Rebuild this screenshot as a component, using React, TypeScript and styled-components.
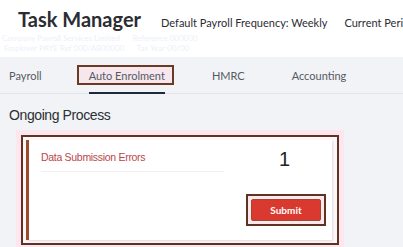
import React from 'react'
import styled, { createGlobalStyle } from 'styled-components'

const Global = createGlobalStyle`
  body {
    margin: 0;
    background: #f1f3f6;
    font-family: Lato, "Liberation Sans", sans-serif;
  }
`

const Page = styled.div`
  width: 403px;
  height: 247px;
  overflow: hidden;
  background: #f1f3f6;
`

const Header = styled.header`
  height: 57px;
  background: #fff;
  padding: 6px 0 0 18px;
  box-sizing: border-box;
  overflow: hidden;
`

const TopRow = styled.div`
  display: flex;
  align-items: baseline;
  white-space: nowrap;
`

const Title = styled.h1`
  margin: 0;
  font-size: 20px;
  line-height: 26px;
  font-weight: 700;
  color: #2b2d33;
`

const Meta = styled.span<{ gap: number }>`
  font-size: 11px;
  color: #2b2d33;
  margin-left: ${(p) => p.gap}px;
`

const Ghost = styled.div`
  margin: 1px 0 0 -18px;
  font-size: 8px;
  line-height: 10px;
  color: #edf0fa;
  white-space: nowrap;
`

const TabBar = styled.nav`
  display: flex;
  gap: 47px;
  height: 37px;
  padding: 0 9px;
  border-bottom: 1px solid #e2e5ea;
  box-sizing: border-box;
`

const Tab = styled.div<{ active?: boolean; marked?: boolean }>`
  position: relative;
  display: flex;
  align-items: center;
  font-size: 11px;
  color: #555a62;
  border-bottom: 2px solid ${(p) => (p.active ? '#1e2a3c' : 'transparent')};
  margin-bottom: -1px;
  padding-top: 1px;

  ${(p) =>
    p.marked &&
    `
    &::before {
      content: '';
      position: absolute;
      left: -12px;
      right: -9px;
      top: 8px;
      height: 20px;
      border: 2px solid #6a3a25;
      background: rgba(252, 214, 228, 0.45);
      box-sizing: border-box;
    }
  `}
`

const TabLabel = styled.span`
  position: relative;
`

const Section = styled.section`
  padding: 13px 0 0 9px;
`

const Heading = styled.h2`
  margin: 0;
  font-family: "Liberation Sans", Arial, sans-serif;
  font-size: 14px;
  letter-spacing: -0.4px;
  font-weight: 400;
  color: #2c2f35;
  line-height: 17px;
`

const Frame = styled.div`
  margin: 6px 0 0 7px;
  width: 328px;
  padding: 5px 5px 3px 5px;
  background: #fde6ee;
  box-sizing: border-box;
`

const FrameBorder = styled.div`
  border: 2px solid #5e3322;
  padding: 3px 5px 3px 3px;
  background: #fff6f9;
`

const Card = styled.div`
  display: grid;
  grid-template-columns: 1fr 90px;
  height: 100px;
  background: #fff;
  border-left: 3px solid #9a4e2c;
  box-shadow: 1px 1px 2px rgba(0, 0, 0, 0.12);
  box-sizing: border-box;
`

const CardMain = styled.div`
  padding: 11px 0 0 12px;
`

const CardTitle = styled.div`
  width: 183px;
  font-family: "Liberation Sans", Arial, sans-serif;
  font-size: 10.5px;
  letter-spacing: -0.3px;
  color: #b9474a;
  padding-bottom: 8px;
  border-bottom: 1px solid #eef0f2;
`

const CardSide = styled.div`
  display: flex;
  flex-direction: column;
  align-items: flex-end;
  justify-content: space-between;
  padding: 8px 6px 14px 0;
`

const Count = styled.div`
  width: 47px;
  font-family: "Liberation Sans", Arial, sans-serif;
  font-size: 20px;
  color: #222;
`

const ButtonMark = styled.div`
  border: 2px solid #5e3322;
  padding: 3px 3px;
  background: #fde6ee;
`

const Button = styled.button`
  display: block;
  width: 70px;
  height: 22px;
  background: #d9392e;
  border: 1.5px solid #9c4a2a;
  border-radius: 2px;
  color: #fff;
  font-family: Lato, sans-serif;
  font-size: 10px;
  font-weight: 700;
  padding: 0;
`

export default function App() {
  return (
    <Page>
      <Global />
      <Header>
        <TopRow>
          <Title>Task Manager</Title>
          <Meta gap={20}>Default Payroll Frequency: Weekly</Meta>
          <Meta gap={17}>Current Period</Meta>
        </TopRow>
        <Ghost>
          <div>&nbsp;Company Payroll Services Limited &nbsp;&nbsp;&nbsp;&nbsp; Reference 000000</div>
          <div>&nbsp;&nbsp;Employer PAYE Ref 000/AB00000 &nbsp;&nbsp;&nbsp;&nbsp; Tax Year 00/00</div>
        </Ghost>
      </Header>
      <TabBar>
        <Tab>Payroll</Tab>
        <Tab active marked>
          <TabLabel>Auto Enrolment</TabLabel>
        </Tab>
        <Tab>HMRC</Tab>
        <Tab>Accounting</Tab>
      </TabBar>
      <Section>
        <Heading>Ongoing Process</Heading>
        <Frame>
          <FrameBorder>
            <Card>
              <CardMain>
                <CardTitle>Data Submission Errors</CardTitle>
              </CardMain>
              <CardSide>
                <Count>1</Count>
                <ButtonMark>
                  <Button>Submit</Button>
                </ButtonMark>
              </CardSide>
            </Card>
          </FrameBorder>
        </Frame>
      </Section>
    </Page>
  )
}
